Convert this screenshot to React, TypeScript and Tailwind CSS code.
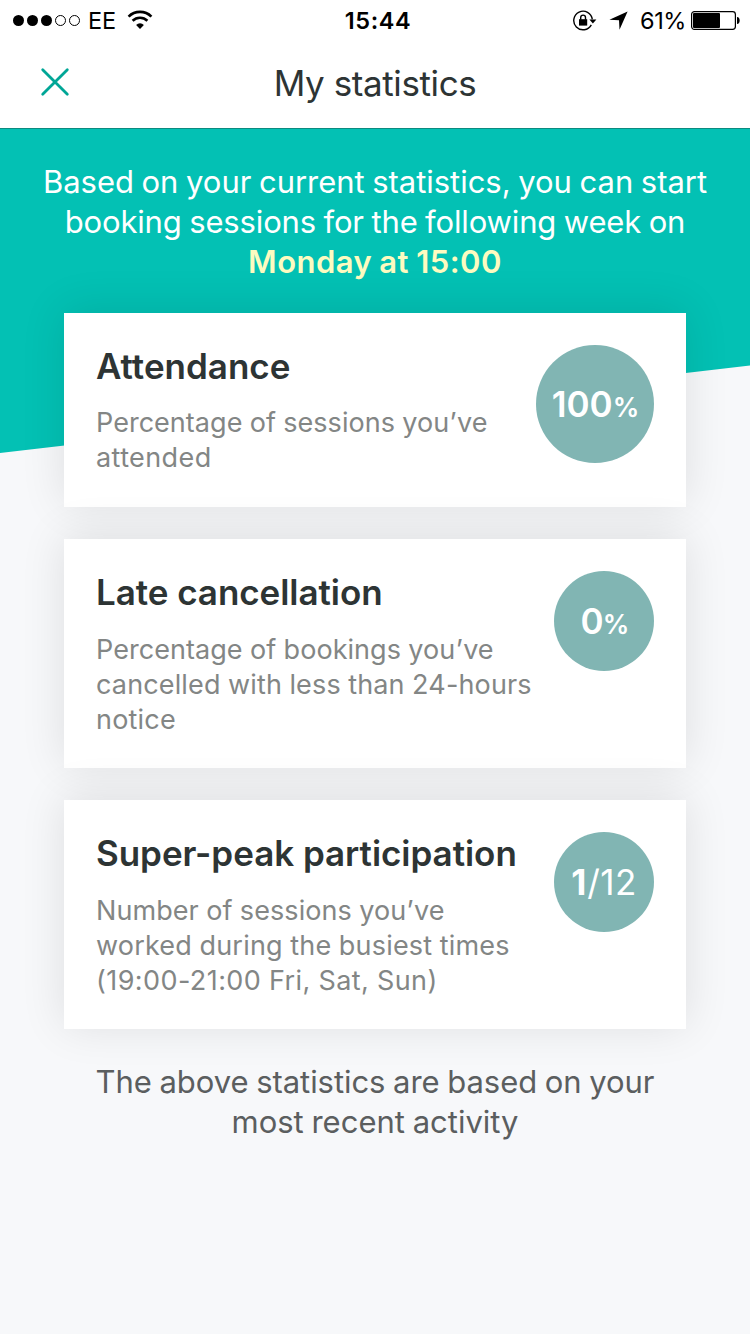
import type { ReactNode } from "react";

const stats = [
  {
    title: "Attendance",
    titleClass: "mb-[17px]",
    lines: [
      { text: "Percentage of sessions you’ve", className: "tracking-[0.03px]" },
      { text: "attended", className: "tracking-[0.4px]" },
    ],
    circleClass: "w-[118px] h-[118px]",
    value: (
      <>
        <span className="font-semibold">100</span>
        <span className="text-[26.5px] font-semibold tracking-[-1px]">%</span>
      </>
    ),
  },
  {
    title: "Late cancellation",
    titleClass: "mb-[18px] tracking-[-0.05px]",
    lines: [
      { text: "Percentage of bookings you’ve", className: "tracking-[0.05px]" },
      { text: "cancelled with less than 24-hours", className: "tracking-[0.14px]" },
      { text: "notice", className: "tracking-[0.2px]" },
    ],
    circleClass: "w-[100px] h-[100px]",
    value: (
      <>
        <span className="font-semibold tracking-[-0.8px]">0</span>
        <span className="text-[26.5px] font-semibold tracking-[-2px]">%</span>
      </>
    ),
  },
  {
    title: "Super-peak participation",
    titleClass: "mb-[18px] tracking-[-0.04px]",
    lines: [
      { text: "Number of sessions you’ve", className: "tracking-[0.07px]" },
      { text: "worked during the busiest times", className: "tracking-[0.19px]" },
      { text: "(19:00-21:00 Fri, Sat, Sun)", className: "tracking-[0.42px]" },
    ],
    circleClass: "w-[100px] h-[100px]",
    value: (
      <>
        <span className="font-bold tracking-[1px]">1</span>
        <span className="tracking-[0.4px]">/12</span>
      </>
    ),
  },
];

function StatusBar() {
  return (
    <div className="relative flex h-[41px] items-center justify-between pl-[13px] pr-[9px] text-black">
      <div className="flex items-center">
        <div className="flex gap-[3px]">
          <span className="h-[11px] w-[11px] rounded-full bg-black" />
          <span className="h-[11px] w-[11px] rounded-full bg-black" />
          <span className="h-[11px] w-[11px] rounded-full bg-black" />
          <span className="h-[11px] w-[11px] rounded-full border border-black" />
          <span className="h-[11px] w-[11px] rounded-full border border-black" />
        </div>
        <span className="ml-2 text-[23.5px] leading-10 tracking-[-0.2px]">EE</span>
        <svg className="ml-[11px] -mt-px" width="26" height="20" viewBox="0 0 26 20" fill="none">
          <path d="M1.6 6.6a16.2 16.2 0 0 1 22.8 0" stroke="#000" strokeWidth="2.7" />
          <path d="M5.6 10.8a10.6 10.6 0 0 1 14.8 0" stroke="#000" strokeWidth="2.6" />
          <path d="M9.1 14.9a5.7 5.7 0 0 1 7.8 0L13 19z" fill="#000" />
        </svg>
      </div>

      {/* clock stays centred whatever the two sides hold */}
      <span className="absolute left-[6px] right-0 text-center text-[23.5px] font-semibold tracking-[0.6px]">
        15:44
      </span>

      <div className="flex items-center">
        <svg width="24" height="22" viewBox="0 0 24 22" fill="none">
          <path d="M18.3 14.8A9.3 9.3 0 1 1 19.3 9.4" stroke="#000" strokeWidth="1.4" />
          <path d="M16.4 9.4h7l-3.5 4.2z" fill="#000" />
          <path d="M6 9.2h8.2v6.4H6z" fill="#000" />
          <path d="M7.7 9.8V7.5a2.4 2.4 0 0 1 4.8 0v2.3" stroke="#000" strokeWidth="1.4" />
        </svg>
        <svg className="ml-3" width="19" height="19" viewBox="0 0 19 19">
          <path d="M18.6.4L.4 8.7l9.6.5.5 9.6z" fill="#000" />
        </svg>
        <span className="ml-3 text-[23.5px] leading-10 tracking-[-0.4px]">61%</span>
        <svg className="ml-[5px]" width="50" height="19" viewBox="0 0 50 19" fill="none">
          <rect x=".6" y=".6" width="43.8" height="17.8" rx="2.8" stroke="#000" strokeWidth="1.2" />
          <rect x="2" y="2" width="27" height="15" rx="1" fill="#000" />
          <path d="M46 6c3.6 0 3.6 7 0 7z" fill="#000" />
        </svg>
      </div>
    </div>
  );
}

function Card({
  title,
  titleClass,
  lines,
  circleClass,
  value,
}: {
  title: string;
  titleClass: string;
  lines: { text: string; className: string }[];
  circleClass: string;
  value: ReactNode;
}) {
  return (
    <div className="relative flex items-start justify-between bg-white px-8 pb-[31px] pt-8 shadow-[0_-3px_42px_rgba(0,0,0,0.105)] first:pb-8">
      <div className="w-0 whitespace-nowrap">
        <h2 className={`-mt-px text-[35px] font-semibold leading-[44px] text-[#2d3434] ${titleClass}`}>
          {title}
        </h2>
        {lines.map((line) => (
          <p
            key={line.text}
            className={`text-[27px] leading-[35px] text-[#838685] [word-spacing:-0.3px] ${line.className}`}
          >
            {line.text}
          </p>
        ))}
      </div>
      <div
        className={`flex shrink-0 items-center justify-center rounded-full bg-[#81b5b3] text-white ${circleClass}`}
      >
        <div className="text-[35px] leading-none">{value}</div>
      </div>
    </div>
  );
}

export default function App() {
  return (
    <div className="flex h-[1334px] w-[750px] flex-col overflow-hidden bg-[#f7f8fa] font-['Inter',sans-serif]">
      <header className="h-32 shrink-0 bg-white">
        <StatusBar />
        <div className="grid h-[86px] grid-cols-[110px_1fr_110px] items-center">
          <button className="flex h-full items-center pl-10 pb-1" aria-label="Close">
            <svg width="30" height="30" viewBox="0 0 30 30">
              <path
                d="M2.7 2.7l24.6 24.6M27.3 2.7L2.7 27.3"
                stroke="#00a696"
                strokeWidth="2.8"
                strokeLinecap="round"
              />
            </svg>
          </button>
          <h1 className="pb-0.5 text-center text-[35px] leading-[44px] tracking-[-0.4px] text-[#2d3434]">
            My statistics
          </h1>
        </div>
      </header>

      <main className="relative flex-1">
        {/* slanted backdrop */}
        <div className="absolute inset-x-0 top-0 h-[325px] border-t border-[#0d8a80] bg-[#03c1b4] [clip-path:polygon(0_0,100%_0,100%_237.5px,0_100%)]" />

        <div className="relative px-16 pt-[34px]">
          <div className="-mx-8 whitespace-nowrap text-center text-[31px] leading-10 text-white [word-spacing:-1px]">
            <p className="tracking-[-0.04px]">Based on your current statistics, you can start</p>
            <p className="tracking-[-0.15px]">booking sessions for the following week on</p>
            <p className="font-semibold tracking-[0.45px] text-[#fdfbc0]">Monday at 15:00</p>
          </div>

          <div className="mt-[31px] flex flex-col gap-8">
            {stats.map((stat) => (
              <Card key={stat.title} {...stat} />
            ))}
          </div>

          <div className="mt-[33px] text-center text-[31px] leading-10 text-[#5b5e5f] [word-spacing:-1px]">
            <p className="tracking-[-0.05px]">The above statistics are based on your</p>
            <p className="tracking-[0px]">most recent activity</p>
          </div>
        </div>
      </main>
    </div>
  );
}
